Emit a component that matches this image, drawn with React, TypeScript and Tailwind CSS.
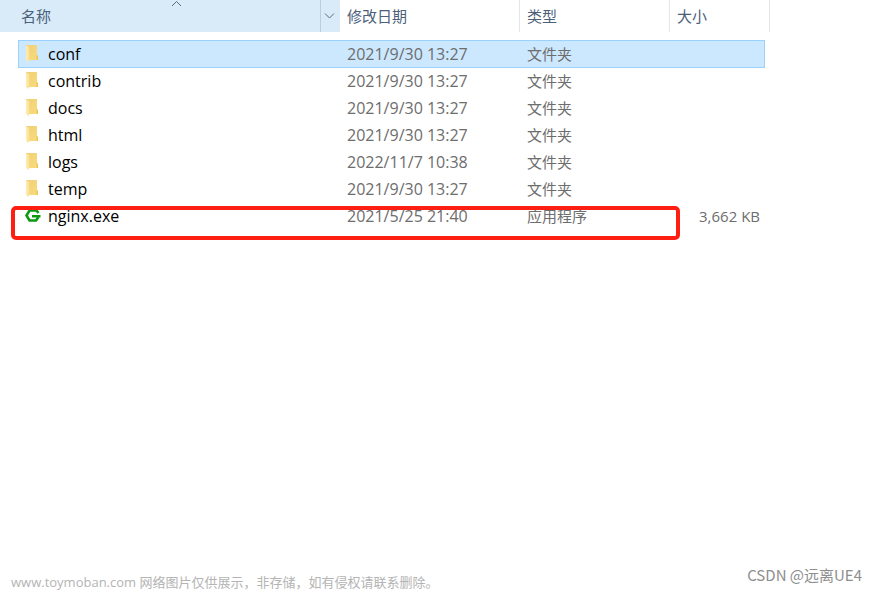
import React from "react";

type Entry = {
  name: string;
  date: string;
  type: string;
  size?: string;
  app?: boolean;
  selected?: boolean;
};

const entries: Entry[] = [
  { name: "conf", date: "2021/9/30 13:27", type: "文件夹", selected: true },
  { name: "contrib", date: "2021/9/30 13:27", type: "文件夹" },
  { name: "docs", date: "2021/9/30 13:27", type: "文件夹" },
  { name: "html", date: "2021/9/30 13:27", type: "文件夹" },
  { name: "logs", date: "2022/11/7 10:38", type: "文件夹" },
  { name: "temp", date: "2021/9/30 13:27", type: "文件夹" },
  { name: "nginx.exe", date: "2021/5/25 21:40", type: "应用程序", size: "3,662 KB", app: true },
];

function FolderIcon() {
  return (
    <svg className="h-5 w-4 shrink-0" viewBox="0 0 16 20" aria-hidden="true">
      <defs>
        <linearGradient id="folder-back" x1="0" y1="0" x2="1" y2="1">
          <stop offset="0" stopColor="#f0cf78" />
          <stop offset="1" stopColor="#f9dc7e" />
        </linearGradient>
        <linearGradient id="folder-front" x1="0" y1="0" x2="1" y2="0">
          <stop offset="0" stopColor="#ffedb0" />
          <stop offset="1" stopColor="#fbdf8e" />
        </linearGradient>
      </defs>
      <path d="M2 1H13V11.500L14 12V16H4L2 14Z" fill="url(#folder-back)" />
      <path d="M2 1.500L5.500 3V15.500L4.500 18L2 16Z" fill="url(#folder-front)" />
      <path d="M12.500 10.500L14 12V16H12.500Z" fill="#edc557" />
    </svg>
  );
}

function NginxIcon() {
  return (
    <svg className="h-5 w-4 shrink-0 overflow-visible" viewBox="0 0 16 20" aria-hidden="true">
      <path
        d="M14.500 7L12.500 4.500H5.500L2.500 9.500L5.500 14.500H12L14.500 11"
        fill="none"
        stroke="#0c9a12"
        strokeWidth="2.600"
      />
      <path d="M8 9H16.500V11.500H8Z" fill="#0c9a12" />
    </svg>
  );
}

function HeaderCell({ label, span }: { label: string; span?: number }) {
  return (
    <th scope="col" colSpan={span} className="p-0 pb-2 font-normal">
      <div className="flex h-8 items-center border-r border-[#e5e5e5] pl-[7px]">{label}</div>
    </th>
  );
}

function Row({ entry }: { entry: Entry }) {
  const on = entry.selected;
  const cell = on ? "border-y border-[#99d1ff] bg-[#cce8ff] p-0" : "p-0";
  return (
    <tr className={on ? "h-7 align-top" : "h-[27px] align-top"} aria-selected={on}>
      <td className="p-0" />
      <td className={on ? `${cell} border-l pl-[5px]` : `${cell} pl-[6px]`}>
        <div className="flex items-center gap-2 text-black">
          {entry.app ? <NginxIcon /> : <FolderIcon />}
          <span>{entry.name}</span>
        </div>
      </td>
      <td className={`${cell} pl-[7px]`}>{entry.date}</td>
      <td className={`${cell} pl-[7px] text-[15px]`}>{entry.type}</td>
      <td className={on ? `${cell} border-r` : `${cell} pr-[5px] text-right text-[15px]`}>{entry.size}</td>
      <td className="p-0" />
    </tr>
  );
}

export default function App() {
  return (
    <div className="flex min-h-screen flex-col justify-between bg-white font-['Open_Sans','Noto_Sans_CJK_SC',sans-serif]">
      <main className="relative overflow-hidden">
        <table className="w-[770px] table-fixed border-separate border-spacing-0 text-left text-base leading-[26px] text-[#6d6d6d]">
          <colgroup>
            <col className="w-[18px]" />
            <col className="w-[322px]" />
            <col className="w-[180px]" />
            <col className="w-[150px]" />
            <col className="w-[95px]" />
            <col className="w-[5px]" />
          </colgroup>
          <thead className="text-[15px] text-[#4c607a]">
            <tr>
              <th scope="col" colSpan={2} aria-sort="ascending" className="p-0 pb-2 font-normal">
                <div className="relative flex h-8 items-center justify-between bg-[#d9ebf9] pl-[21px]">
                  <span>名称</span>
                  <svg className="absolute top-0 left-[171px] h-2 w-3" viewBox="0 0 12 8" aria-hidden="true">
                    <path d="M1 6L5.500 1.500L10 6" fill="none" stroke="#5f6b78" />
                  </svg>
                  <button
                    type="button"
                    aria-label="筛选"
                    className="flex h-8 w-5 items-center border-l border-[#bccddb] pl-[3px]"
                  >
                    <svg className="h-2 w-3" viewBox="0 0 12 8" aria-hidden="true">
                      <path d="M1 1.500L5.500 6L10 1.500" fill="none" stroke="#5f6b78" />
                    </svg>
                  </button>
                </div>
              </th>
              <HeaderCell label="修改日期" />
              <HeaderCell label="类型" />
              <HeaderCell label="大小" span={2} />
            </tr>
          </thead>
          <tbody>
            {entries.map((entry) => (
              <Row key={entry.name} entry={entry} />
            ))}
          </tbody>
        </table>
        <div className="pointer-events-none absolute top-[206px] left-[11px] h-[34px] w-[669px] rounded-[5px] border-4 border-[#ff1f12]" />
        <div className="h-4" />
      </main>
      <footer className="flex items-start justify-between pr-[15px] pl-[11px]">
        <p className="pt-2 text-[13px] leading-[18px] text-[#b4b4b4]">
          www.toymoban.com 网络图片仅供展示，非存储，如有侵权请联系删除。
        </p>
        <p className="font-['Noto_Sans_CJK_SC',sans-serif] text-[15px] leading-5 text-[#8e8e8e]">CSDN @远离UE4</p>
      </footer>
    </div>
  );
}
